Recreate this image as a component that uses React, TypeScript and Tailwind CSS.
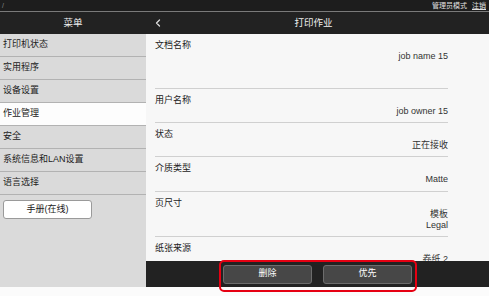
import { ChevronLeft } from "lucide-react";

const menu = ["打印机状态", "实用程序", "设备设置", "作业管理", "安全", "系统信息和LAN设置", "语言选择"];

const rows: { label: string; values: string[]; h: string }[] = [
  { label: "文档名称", values: ["job name 15"], h: "h-[55px]" },
  { label: "用户名称", values: ["job owner 15"], h: "h-[34px]" },
  { label: "状态", values: ["正在接收"], h: "h-[34px]" },
  { label: "介质类型", values: ["Matte"], h: "h-[35px]" },
  { label: "页尺寸", values: ["模板", "Legal"], h: "h-[45px]" },
  { label: "纸张来源", values: ["卷纸 2"], h: "h-[34px]" },
];

export default function App() {
  return (
    <div
      className="w-[489px] h-[296px] flex flex-col bg-[#fbfbfb] text-[#222] overflow-hidden"
      style={{ fontFamily: '"Liberation Sans", "Noto Sans CJK SC", sans-serif' }}
    >
      {/* top strip */}
      <div className="h-[12px] bg-[#1d1d1d] border-b border-[#7a7a7a] flex items-center justify-between pl-[2px] pr-[3px] text-[7px] leading-none text-[#e0e0e0]">
        <span className="text-[#888]">/</span>
        <div className="flex gap-[5px]">
          <span>管理员模式</span>
          <span className="underline">注销</span>
        </div>
      </div>

      {/* header */}
      <div className="h-[22px] bg-[#222] flex items-center text-[9.5px] text-[#f0f0f0]">
        <div className="w-[146px] text-center">菜单</div>
        <div className="flex-1 flex items-center relative h-full">
          <ChevronLeft className="ml-[6px] w-[12px] h-[12px] text-[#ddd]" strokeWidth={2.5} />
          <div className="flex-1 text-center pr-[26px]">打印作业</div>
        </div>
      </div>

      {/* body */}
      <div className="h-[253px] flex">
        <div className="w-[146px] bg-[#dadada] flex flex-col text-[9px]">
          {menu.map((m) => (
            <div
              key={m}
              className={`h-[23px] border-b border-[#b2b2b2] flex items-center pl-[3px] ${m === "作业管理" ? "bg-[#fdfdfd]" : ""}`}
            >
              {m}
            </div>
          ))}
          <div className="pt-[5px] pl-[3px]">
            <div className="w-[89px] h-[19px] bg-white border border-[#9a9a9a] rounded-[3px] flex items-center justify-center">
              手册(在线)
            </div>
          </div>
        </div>

        <div className="flex-1 flex flex-col bg-[#f7f7f7]">
          <div className="h-[227px] overflow-hidden pl-[9px] pr-[41px] text-[9px] leading-[11px]">
            {rows.map((r) => (
              <div key={r.label} className={`${r.h} border-b border-[#d0d0d0] pt-[6px]`}>
                <div>{r.label}</div>
                {r.values.map((v) => (
                  <div key={v} className="text-right text-[#333]">
                    {v}
                  </div>
                ))}
              </div>
            ))}
          </div>
          <div className="h-[26px] bg-[#222] flex items-center justify-center gap-[11px] relative text-[9px] text-white">
            <div className="w-[89px] h-[19px] bg-[#474747] border border-[#6c6c6c] rounded-[3px] flex items-center justify-center">
              删除
            </div>
            <div className="w-[89px] h-[19px] bg-[#474747] border border-[#6c6c6c] rounded-[3px] flex items-center justify-center">
              优先
            </div>
            <div className="absolute left-[73px] top-[-1px] w-[198px] h-[32px] border-2 border-[#e60012] rounded-[5px]" />
          </div>
        </div>
      </div>

      <div className="flex-1 bg-[#fbfbfb]" />
    </div>
  );
}
